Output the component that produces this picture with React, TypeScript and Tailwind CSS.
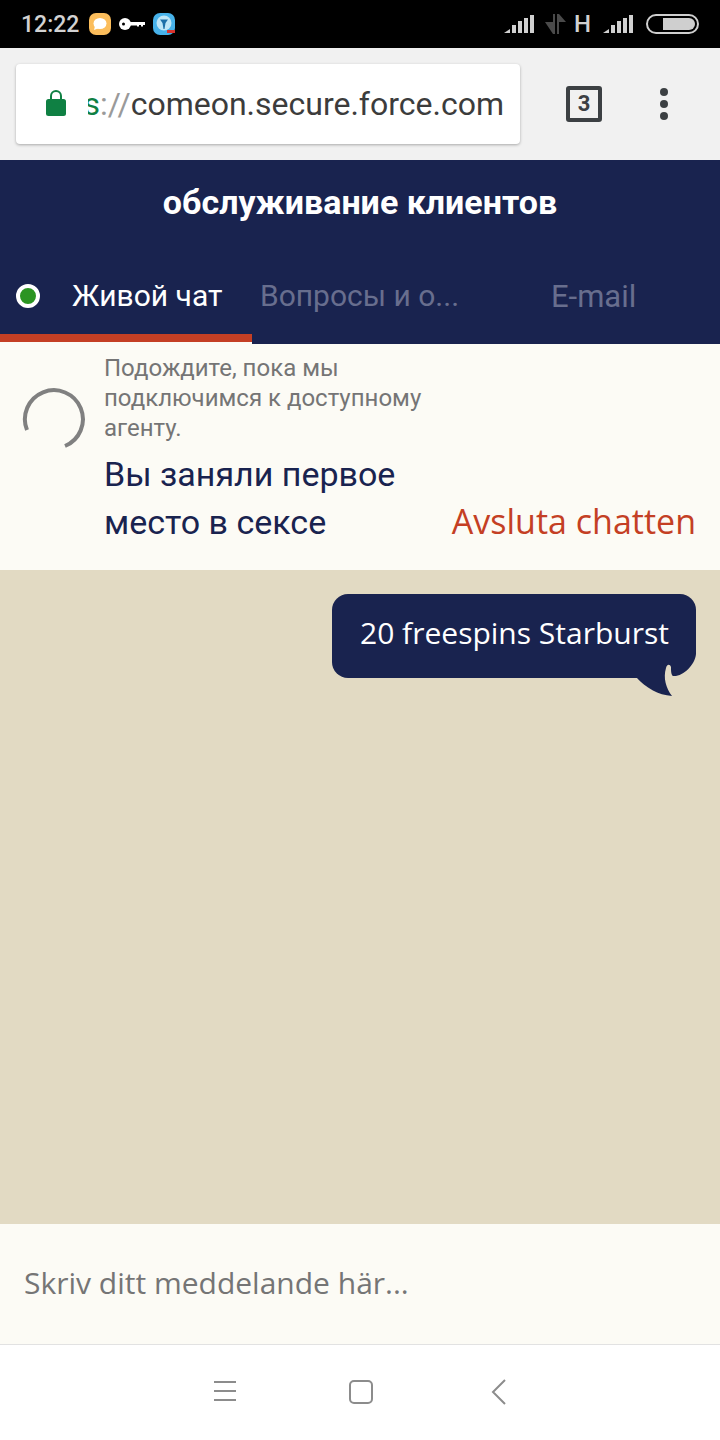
const roboto = "font-['Roboto',sans-serif]";

function SignalBars() {
  return (
    <svg width="30" height="20" viewBox="0 0 30 20" className="block">
      <path d="M0 19 L6 15 V19 Z" fill="#d0d0d0" />
      <rect x="8" y="11" width="4" height="8" fill="#d0d0d0" />
      <rect x="14" y="7" width="4" height="12" fill="#d0d0d0" />
      <rect x="20" y="4" width="4" height="15" fill="#d0d0d0" />
      <rect x="26" y="1" width="4" height="18" fill="#d0d0d0" />
    </svg>
  );
}

function StatusBar() {
  return (
    <div className="h-12 bg-black flex items-center justify-between pl-[21px] pr-[21px]">
      <div className="flex items-center">
        <span className={`${roboto} w-[57px] text-[23px] font-medium text-[#d2d2d2] leading-none`}>12:22</span>
        <svg width="22" height="22" viewBox="0 0 22 22" className="ml-[11px]">
          <rect width="22" height="22" rx="7" fill="#fbbd5b" />
          <ellipse cx="11" cy="10.5" rx="6.5" ry="5.5" fill="#fff" />
          <path d="M6 13 L5 17 L10 15 Z" fill="#fff" />
        </svg>
        <svg width="26" height="14" viewBox="0 0 26 14" className="ml-2">
          <circle cx="6" cy="7" r="6" fill="#fff" />
          <circle cx="4.5" cy="7" r="1.5" fill="#000" />
          <path d="M10 5 H26 V8 H24 V9.5 H22 V8 H20 V9.5 H18 V8.5 H10 Z" fill="#fff" />
        </svg>
        <svg width="22" height="22" viewBox="0 0 22 22" className="ml-2">
          <rect width="22" height="22" rx="7" fill="#47b2ea" />
          <circle cx="11" cy="10" r="7.5" fill="#bfe6f7" />
          <path d="M7 6.5 H15 L12.5 10 L11.5 16 H10.5 L9.5 10 Z" fill="#1d6fa8" />
          <rect x="14" y="17" width="8" height="3" fill="#d8342f" />
        </svg>
      </div>
      <div className="flex items-center">
        <SignalBars />
        <svg width="22" height="20" viewBox="0 0 22 20" className="ml-[11px]">
          <path d="M0 8 H8 V0 H10 V20 H8 Z" fill="#4a4a4a" transform="translate(0 0)" />
          <path d="M12 20 V0 H14 L21 8 H14 V20 Z" fill="#4a4a4a" />
        </svg>
        <span className={`${roboto} ml-[7px] text-[24px] font-medium text-[#d0d0d0] leading-none`}>H</span>
        <div className="ml-[12px]">
          <SignalBars />
        </div>
        <div className="ml-[13px] w-[53px] h-[20px] rounded-full border-2 border-[#cfcfcf] flex justify-end items-center pr-[2px]">
          <div className="w-[32px] h-[12px] rounded-r-full bg-[#cfcfcf]" />
        </div>
      </div>
    </div>
  );
}

function UrlBar() {
  return (
    <div className="h-[112px] bg-[#f1f1f1] flex items-center pl-4">
      <div className="w-[504px] h-20 bg-white rounded shadow-[0_1px_3px_rgba(0,0,0,0.3)] flex items-center pl-[30px] pr-4">
        <svg width="20" height="26" viewBox="0 0 20 26" className="shrink-0 -mt-[2px]">
          <path d="M5 11 V6 a5 5 0 0 1 10 0 V11" fill="none" stroke="#0f8043" strokeWidth="2" />
          <rect y="9" width="20" height="17" rx="2.5" fill="#0f8043" />
        </svg>
        <div className={`${roboto} ml-[22px] flex-1 overflow-hidden flex justify-end whitespace-nowrap text-[32px] leading-none`}>
          <span className="text-[#0f8043]">https</span>
          <span className="text-[#9a9a9a]">://</span>
          <span className="text-[#3c3c3c]">comeon.secure.force.com</span>
        </div>
      </div>
      <div className="ml-[46px] w-9 h-9 rounded-[3px] border-[4px] border-[#3c4043] flex items-center justify-center">
        <span className={`${roboto} text-[22px] font-bold text-[#3c4043] leading-none`}>3</span>
      </div>
      <div className="ml-[58px] flex flex-col gap-[4px]">
        <div className="w-2 h-2 rounded-full bg-[#3c4043]" />
        <div className="w-2 h-2 rounded-full bg-[#3c4043]" />
        <div className="w-2 h-2 rounded-full bg-[#3c4043]" />
      </div>
    </div>
  );
}

function Header() {
  return (
    <div className={`${roboto} bg-[#19234f] h-[184px] flex flex-col`}>
      <div className="h-[86px] flex items-center justify-center pb-[2px] text-white text-[34px] font-bold leading-none">
        обслуживание клиентов
      </div>
      <div className="flex h-[98px]">
        <div className="w-[252px] flex flex-col">
          <div className="h-[96px] border-b-[8px] border-[#c43f24] flex items-center pl-4 pt-[12px]">
            <div className="w-6 h-6 rounded-full bg-[#2b9422] border-[4px] border-white" />
            <span className="ml-8 text-[30px] text-white leading-none">Живой чат</span>
          </div>
          <div className="h-[2px] bg-[#fcfbf5]" />
        </div>
        <div className="w-[234px] flex items-center pl-[8px] pt-[10px] pb-2 text-[30px] text-[#686e8e] leading-none">
          Вопросы и о...
        </div>
        <div className="flex-1 flex items-center pl-[65px] pt-[10px] pb-2 text-[31px] text-[#686e8e] leading-none">
          E-mail
        </div>
      </div>
    </div>
  );
}

function WaitPanel() {
  return (
    <div className={`${roboto} bg-[#fcfbf5] h-[226px] flex items-start`}>
      <svg width="66" height="66" viewBox="0 0 66 66" className="ml-[21px] mt-[42px] shrink-0">
        <path d="M6 44 A29 29 0 1 1 44 60" fill="none" stroke="#808080" strokeWidth="4" />
      </svg>
      <div className="ml-[17px] w-[340px] pt-[9px] shrink-0">
        <p className="text-[24px] leading-[30px] text-[#757575]">Подождите, пока мы подключимся к доступному агенту.</p>
        <p className="mt-[7px] text-[34px] leading-[48px] text-[#19234f]">Вы заняли первое место в сексе</p>
      </div>
      <div className="flex-1 flex justify-end pr-[24px] pt-[153px] whitespace-nowrap">
        <span className="text-[34px] leading-[48px] text-[#c43f24] font-['Open_Sans',sans-serif]">Avsluta chatten</span>
      </div>
    </div>
  );
}

function Chat() {
  return (
    <div className="bg-[#e2dac3] h-[654px] flex justify-end items-start pt-6 pr-6">
      <div className="relative">
        <div className="bg-[#19234f] rounded-[16px] rounded-br-none h-[84px] w-[364px] flex items-center pl-7 pb-[6px] font-['Open_Sans',sans-serif] text-[30px] text-white leading-none whitespace-nowrap">
          20 freespins Starburst
        </div>
        <svg width="60" height="46" viewBox="0 0 60 46" className="absolute right-0 top-[56px]">
          <path d="M0 27 H40 V46 H36 C22 45 10 38 0 27 Z" fill="#19234f" />
          <path d="M60 4 C59 15 47 27 37 26 C35 25 35 20 35 17 C34 14 31 14 30 18 C27 28 30 38 36 46 L60 46 Z" fill="#e2dac3" />
        </svg>
      </div>
    </div>
  );
}

function Composer() {
  return (
    <div className="h-[120px] bg-[#fcfbf5] flex items-center pl-6 pb-[3px] font-['Open_Sans',sans-serif] text-[30px] text-[#757575]">
      Skriv ditt meddelande här...
    </div>
  );
}

function NavBar() {
  return (
    <div className="h-[96px] bg-white border-t border-[#e2e2e2] flex items-start pt-[35px] pl-[214px]">
      <div className="flex flex-col gap-[7px] pt-[1px]">
        <div className="w-[22px] h-[2px] bg-[#8c8c8c]" />
        <div className="w-[22px] h-[2px] bg-[#8c8c8c]" />
        <div className="w-[22px] h-[2px] bg-[#8c8c8c]" />
      </div>
      <div className="ml-[113px] w-6 h-6 rounded-[5px] border-2 border-[#8c8c8c]" />
      <svg width="16" height="26" viewBox="0 0 16 26" className="ml-[118px] -mt-[1px]">
        <path d="M14 1 L2 13 L14 25" fill="none" stroke="#8c8c8c" strokeWidth="2" />
      </svg>
    </div>
  );
}

export default function App() {
  return (
    <div className="w-[720px] h-[1440px] overflow-hidden flex flex-col">
      <StatusBar />
      <UrlBar />
      <Header />
      <WaitPanel />
      <Chat />
      <Composer />
      <NavBar />
    </div>
  );
}
